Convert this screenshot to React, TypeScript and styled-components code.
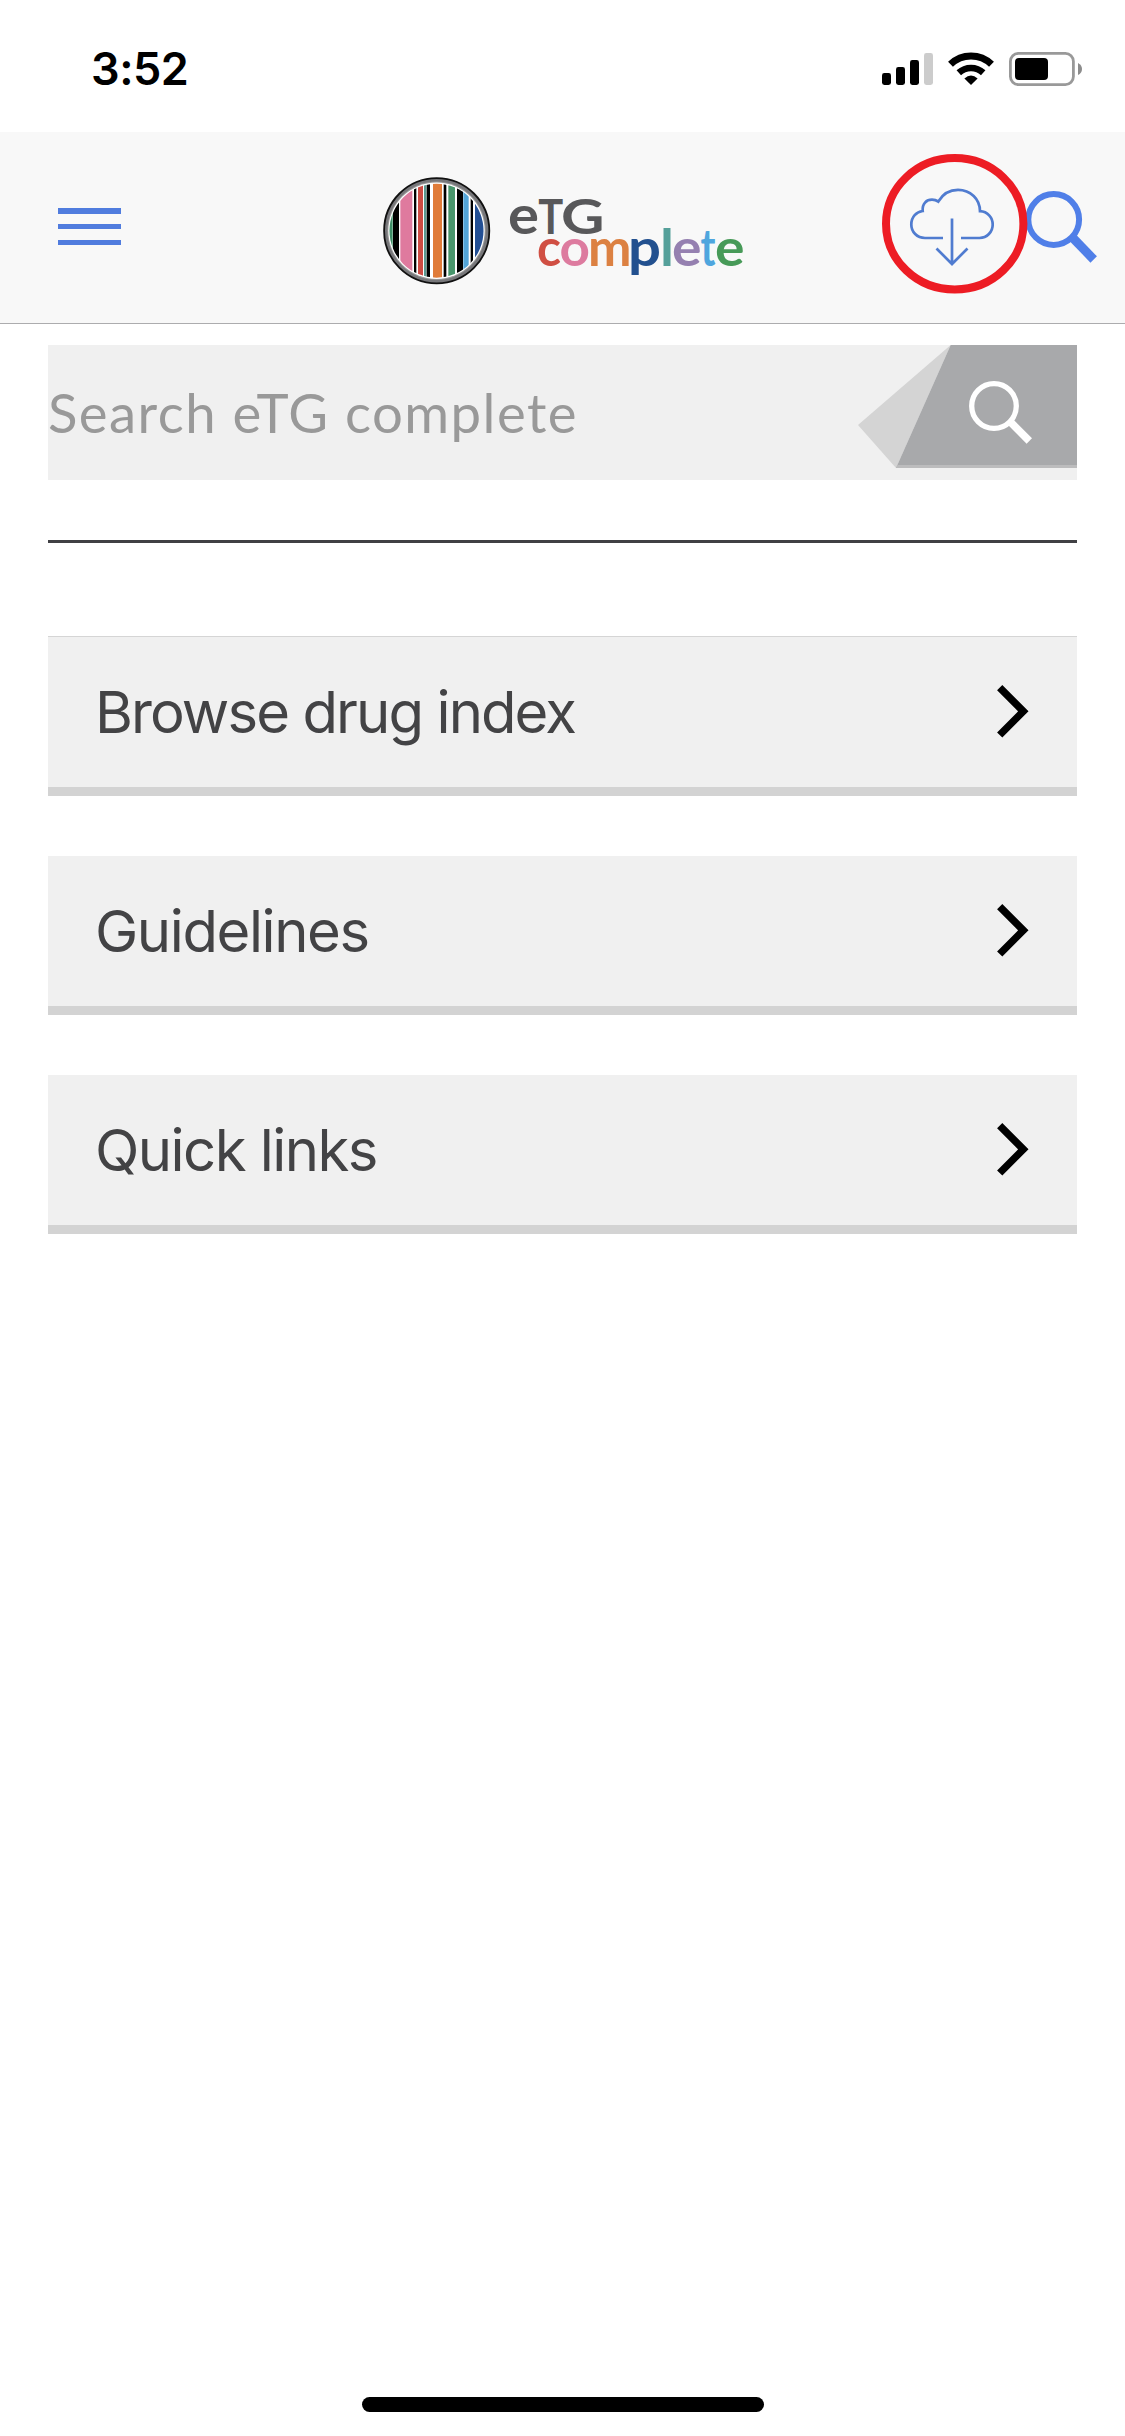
import React from "react";
import styled, { createGlobalStyle } from "styled-components";

const GlobalStyle = createGlobalStyle`
  * { box-sizing: border-box; }
  body { margin: 0; background: #fff; font-family: Inter, "Liberation Sans", sans-serif; }
`;

const Screen = styled.div`
  width: 1125px;
  height: 2436px;
  display: flex;
  flex-direction: column;
  background: #fff;
  overflow: hidden;
`;

const StatusBar = styled.div`
  height: 132px;
  flex: none;
  display: flex;
  justify-content: space-between;
  padding: 0 42px 0 91px;
`;

const Time = styled.div`
  padding-top: 42px;
  font-size: 45px;
  line-height: 54px;
  font-weight: 600;
  letter-spacing: -0.5px;
  color: #000;
`;

const StatusIcons = styled.div`
  display: flex;
  gap: 15px;
  padding-top: 52px;
  height: 86px;
`;

const Header = styled.header`
  height: 192px;
  flex: none;
  display: flex;
  align-items: flex-start;
  justify-content: space-between;
  background: #f8f8f8;
  border-bottom: 1px solid #acacae;
  padding: 0 27px 0 58px;
`;

const MenuButton = styled.div`
  width: 63px;
  margin-top: 76px;
  display: flex;
  flex-direction: column;
  gap: 10.3px;
`;

const MenuLine = styled.span`
  height: 5.5px;
  background: #507cde;
`;

const Brand = styled.div`
  width: 364px;
  margin: 40px 0 0 261px;
  height: 118px;
`;

const Actions = styled.div`
  display: flex;
  margin: 22px 0 0 auto;
`;

const DownloadButton = styled.div`
  position: relative;
  z-index: 1;
  width: 146px;
  height: 140px;
`;

const FindButton = styled.div`
  margin: 36px 0 0 -3px;
`;

const Main = styled.main`
  padding: 21px 48px 0;
  flex: 1;
`;

const SearchBox = styled.div`
  height: 135px;
  display: flex;
  justify-content: space-between;
  background: #f0f0f0;
`;

const Placeholder = styled.div`
  padding: 35px 0 0 0;
  font-family: Lato, "Liberation Sans", sans-serif;
  font-size: 54.5px;
  line-height: 64px;
  letter-spacing: 1.45px;
  color: #999;
  white-space: nowrap;
`;

const Divider = styled.div`
  height: 3px;
  margin: 60px 0 93px;
  background: #404044;
`;

const Menu = styled.nav`
  display: flex;
  flex-direction: column;
  gap: 60px;
`;

const MenuRow = styled.div<{ $first?: boolean }>`
  height: ${(p) => (p.$first ? 160 : 159)}px;
  border-top: ${(p) => (p.$first ? "1px solid #d5d5d5" : "none")};
  border-bottom: 9px solid #d3d3d3;
  background: #f0f0f0;
  display: flex;
  align-items: center;
  justify-content: space-between;
  padding: 0 48px 0 47px;
`;

const RowLabel = styled.span<{ $spacing: number }>`
  font-size: 58px;
  line-height: 70px;
  letter-spacing: ${(p) => p.$spacing}px;
  color: #434345;
  white-space: nowrap;
`;

const HomeIndicator = styled.div`
  width: 402px;
  height: 15px;
  flex: none;
  margin: 0 auto 24px 362px;
  border-radius: 8px;
  background: #000;
`;

const Signal = () => (
  <svg width="51" height="34" viewBox="882 52 51 34">
    <rect x="882" y="73" width="9" height="12" rx="2.4" />
    <rect x="896" y="67" width="9" height="18" rx="2.4" />
    <rect x="910" y="60" width="9" height="25" rx="2.4" />
    <rect x="924" y="53" width="9" height="32" rx="2.4" fill="#ccc" />
  </svg>
);

const Wifi = () => (
  <svg width="46" height="34" viewBox="948 52 46 34">
    <path d="M950.5 64.2 A29.5 29.5 0 0 1 991.5 64.2" fill="none" stroke="#000" strokeWidth="7" />
    <path d="M958.8 72.7 A18 18 0 0 1 983.2 72.7" fill="none" stroke="#000" strokeWidth="6.6" />
    <path d="M964.4 78.4 Q971 72.4 977.6 78.4 L971 85 Z" />
  </svg>
);

const Battery = () => (
  <svg width="74" height="34" viewBox="1009 52 74 34">
    <rect x="1010.4" y="53.4" width="63" height="31.2" rx="8" fill="none" stroke="#999" strokeWidth="2.8" />
    <rect x="1015" y="58" width="33" height="22" rx="4" />
    <path d="M1078 63 Q1082 65 1082 69 T1078 75 Z" fill="#8c8c8c" />
  </svg>
);

const stripes: [number, number, string][] = [
  [56, 12, "#3f8f68"],
  [69, 18, "#000"],
  [91, 36, "#df7a9e"],
  [132, 7, "#000"],
  [144, 15, "#cd4c44"],
  [162, 7, "#5b9a92"],
  [170, 10, "#000"],
  [189, 27, "#e07c3a"],
  [221, 8, "#000"],
  [235, 20, "#48966c"],
  [261, 18, "#000"],
  [280, 16, "#52a5d8"],
  [302, 7, "#000"],
  [315, 28, "#234f94"],
];

const letters: [string, number, number, string][] = [
  ["c", 537, 24, "#d04f43"],
  ["o", 559.5, 30.5, "#dd7b9f"],
  ["m", 588, 43.5, "#dc8142"],
  ["p", 628, 33, "#22508f"],
  ["l", 660, 14, "#55a09a"],
  ["e", 672, 29.5, "#9580b0"],
  ["t", 700.5, 15, "#4fa6de"],
  ["e", 715, 29.5, "#479a58"],
];

const Logo = () => (
  <svg width="364" height="118" viewBox="382 172 364 118">
    <defs>
      <clipPath id="disc">
        <circle cx="436.5" cy="230.7" r="47" />
      </clipPath>
    </defs>
    <circle cx="436.7" cy="230.7" r="52.6" fill="#77777a" stroke="#111" strokeWidth="1.8" />
    <circle cx="436.5" cy="230.7" r="49.2" fill="#999" />
    <circle cx="436.5" cy="230.7" r="48.2" fill="#fff" />
    <g clipPath="url(#disc)">
      {stripes.map(([x, w, color]) => (
        <rect key={x} x={370 + x / 3} y="180" width={w / 3} height="102" fill={color} />
      ))}
    </g>
    <g fontFamily='Lato, "Liberation Sans", sans-serif' fontWeight="700">
      <g fontSize="47" fill="#58585a">
        <text x="508" y="234.3" fontSize="53" textLength="31" lengthAdjust="spacingAndGlyphs">e</text>
        <text x="538.3" y="234" textLength="25" lengthAdjust="spacingAndGlyphs">T</text>
        <text x="561" y="234" textLength="43.5" lengthAdjust="spacingAndGlyphs">G</text>
      </g>
      <g fontSize="51">
        {letters.map(([ch, x, w, color]) => (
          <text key={x} x={x} y="265.6" textLength={w} lengthAdjust="spacingAndGlyphs" fill={color}>
            {ch}
          </text>
        ))}
      </g>
    </g>
  </svg>
);

const CloudDownload = () => (
  <svg width="146" height="140" viewBox="882 153.5 146 140">
    <g fill="none" stroke="#507cd0" strokeWidth="2.7">
      <path d="M943 237.5 H925 C917 237.5 911.3 231.5 911.3 224 C911.3 216.5 916.5 211.2 922.7 210.5 C922 203 926.5 199.2 932 199.2 Q935.5 199.2 938.3 201 C943 193 950 189.3 958 189.3 C970.5 189.3 980 198.5 980 210.7 C987.5 211.2 992.7 217 992.7 224 C992.7 231.5 987 237.5 979.5 237.5 H961" />
      <path d="M952 218 V263 M936.5 248 L952 263.5 L967.5 248" />
    </g>
    <ellipse cx="954.7" cy="223.3" rx="68.7" ry="65.7" fill="none" stroke="#ed1c24" strokeWidth="8" />
  </svg>
);

const Magnifier = () => (
  <svg width="73" height="74" viewBox="1025 190 73 74">
    <g fill="none" stroke="#507fe8">
      <circle cx="1053.7" cy="219.5" r="25.4" strokeWidth="6" />
      <path d="M1071.5 236.5 L1093.7 259.5" strokeWidth="9" />
    </g>
  </svg>
);

const SearchButton = () => (
  <svg width="219" height="123" viewBox="858 345 219 123">
    <path d="M950.7 345 L858 425 L896 468 Z" fill="#d4d4d4" />
    <path d="M950.7 345 H1077 V468 H896 Z" fill="#a8a9ab" />
    <path d="M897.3 465 H1077 V468 H896 Z" fill="#bcbcbd" />
    <g fill="none" stroke="#fff">
      <circle cx="994" cy="406" r="22.3" strokeWidth="5.3" />
      <path d="M1010.5 422 L1029.3 441" strokeWidth="7.6" />
    </g>
  </svg>
);

const Chevron = () => (
  <svg width="32" height="54" viewBox="997 685 32 54">
    <path d="M999.7 687.7 L1023.3 711.3 L999.7 735" fill="none" stroke="#000" strokeWidth="7.4" />
  </svg>
);

export default function App() {
  return (
    <>
      <GlobalStyle />
      <Screen>
        <StatusBar>
          <Time>3:52</Time>
          <StatusIcons>
            <Signal />
            <Wifi />
            <Battery />
          </StatusIcons>
        </StatusBar>
        <Header>
          <MenuButton>
            <MenuLine />
            <MenuLine />
            <MenuLine />
          </MenuButton>
          <Brand>
            <Logo />
          </Brand>
          <Actions>
            <DownloadButton>
              <CloudDownload />
            </DownloadButton>
            <FindButton>
              <Magnifier />
            </FindButton>
          </Actions>
        </Header>
        <Main>
          <SearchBox>
            <Placeholder>Search eTG complete</Placeholder>
            <SearchButton />
          </SearchBox>
          <Divider />
          <Menu>
            <MenuRow $first>
              <RowLabel $spacing={-1.9}>Browse drug index</RowLabel>
              <Chevron />
            </MenuRow>
            <MenuRow>
              <RowLabel $spacing={-1.4}>Guidelines</RowLabel>
              <Chevron />
            </MenuRow>
            <MenuRow>
              <RowLabel $spacing={-1.55}>Quick links</RowLabel>
              <Chevron />
            </MenuRow>
          </Menu>
        </Main>
        <HomeIndicator />
      </Screen>
    </>
  );
}
